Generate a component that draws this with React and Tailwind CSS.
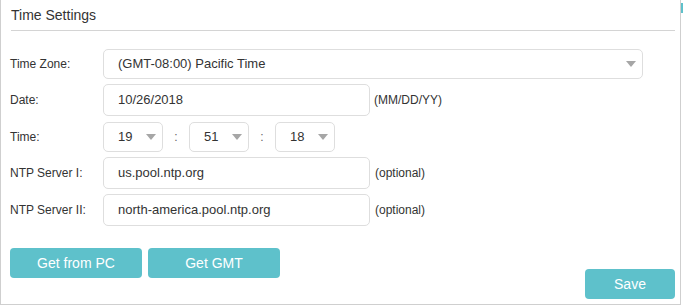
import React from "react";

const font = { fontFamily: '"Liberation Sans", Arial, sans-serif' };

function Arrow() {
  return (
    <svg width="10" height="6" viewBox="0 0 10 6" className="shrink-0">
      <path d="M0 0 L10 0 L5 6 Z" fill="#a6a6a6" />
    </svg>
  );
}

function Select({ value, className }) {
  return (
    <div
      className={`flex h-[30px] items-center justify-between rounded-[5px] border border-[#dedede] bg-white pl-[14px] pr-[6px] text-[13px] text-[#333] ${className}`}
    >
      <span>{value}</span>
      <Arrow />
    </div>
  );
}

function Input({ value }) {
  return (
    <div className="flex h-[32px] w-[267px] items-center rounded-[5px] border border-[#dedede] bg-white pl-[14px] text-[13px] text-[#333]">
      {value}
    </div>
  );
}

function Label({ children }) {
  return <div className="w-[93px] shrink-0 text-[12px] text-[#333]">{children}</div>;
}

function Btn({ children, className }) {
  return (
    <div
      className={`flex h-[30px] items-center justify-center rounded-[4px] bg-[#5ec1cb] text-[14px] text-white ${className}`}
    >
      {children}
    </div>
  );
}

export default function App() {
  return (
    <div style={font} className="relative h-[305px] w-[681px] border-x border-b border-[#cfcfcf] bg-white">
      <div className="absolute right-[-3px] top-[3px] h-[10px] w-[2px] bg-[#5ec1cb]" />
      <div className="ml-[10px] mr-[5px] h-[31px] border-b border-[#d4d4d4] pt-[5px] text-[14px] leading-[20px] text-[#333]">
        Time Settings
      </div>
      <div className="flex flex-col pl-[9px]">
        <div className="mt-[18px] flex items-center">
          <Label>Time Zone:</Label>
          <Select value="(GMT-08:00) Pacific Time" className="w-[540px]" />
        </div>
        <div className="mt-[5px] flex items-center">
          <Label>Date:</Label>
          <Input value="10/26/2018" />
          <span className="ml-[4px] text-[12px] text-[#333]">(MM/DD/YY)</span>
        </div>
        <div className="mt-[6px] flex items-center">
          <Label>Time:</Label>
          <Select value="19" className="w-[60px]" />
          <span className="w-[26px] text-center text-[12px] text-[#666]">:</span>
          <Select value="51" className="w-[60px]" />
          <span className="w-[26px] text-center text-[12px] text-[#666]">:</span>
          <Select value="18" className="w-[60px]" />
        </div>
        <div className="mt-[5px] flex items-center">
          <Label>NTP Server I:</Label>
          <Input value="us.pool.ntp.org" />
          <span className="ml-[5px] text-[12px] text-[#333]">(optional)</span>
        </div>
        <div className="mt-[5px] flex items-center">
          <Label>NTP Server II:</Label>
          <Input value="north-america.pool.ntp.org" />
          <span className="ml-[5px] text-[12px] text-[#333]">(optional)</span>
        </div>
      </div>
      <div className="mt-[22px] flex h-[51px] justify-between pl-[9px] pr-[5px]">
        <div className="flex items-start gap-[6px]">
          <Btn className="w-[132px]">Get from PC</Btn>
          <Btn className="w-[132px]">Get GMT</Btn>
        </div>
        <Btn className="w-[90px] self-end">Save</Btn>
      </div>
    </div>
  );
}
